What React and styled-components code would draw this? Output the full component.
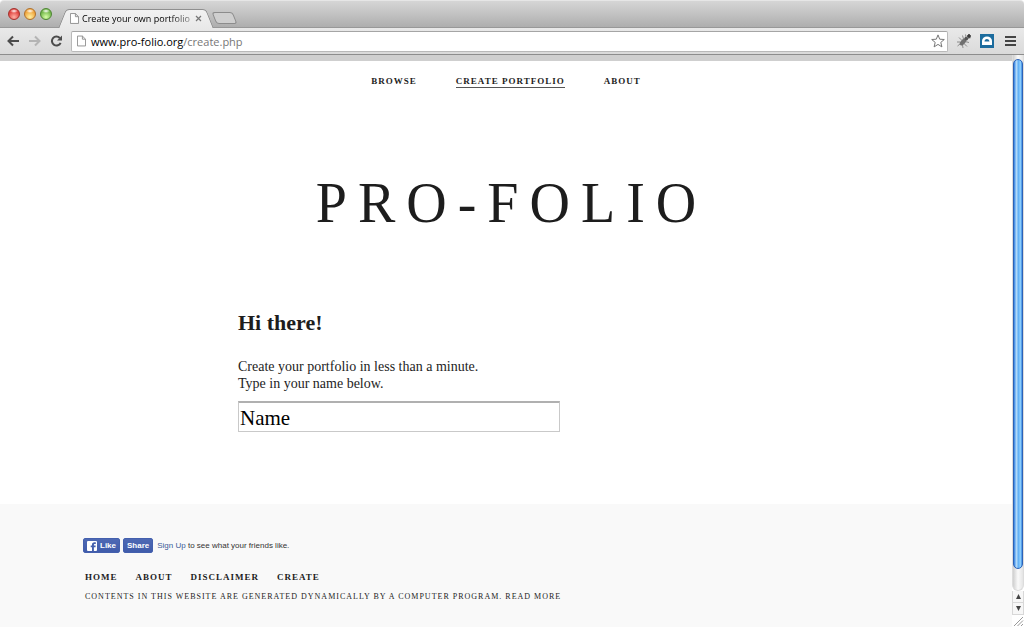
import React from 'react';
import styled, { createGlobalStyle } from 'styled-components';

const serif = "'Liberation Serif', 'Times New Roman', serif";
const sans = "'Liberation Sans', Arial, sans-serif";
const chromeFont = "'Open Sans', 'Noto Sans', sans-serif";
const ink = '#1d1d1d';
const facebook = '#4460ae';

const GlobalStyle = createGlobalStyle`
  * {
    box-sizing: border-box;
  }
  body {
    margin: 0;
    background: #fff;
    color: ${ink};
    font-family: ${serif};
  }
`;

const Browser = styled.div`
  min-height: 100vh;
  display: flex;
  flex-direction: column;
`;

const TabStrip = styled.div`
  display: flex;
  align-items: flex-end;
  height: 28px;
  padding-left: 8px;
  background: linear-gradient(#d6d6d6, #aeaeae);
  border-top: 1px solid #e6e6e6;
  border-bottom: 1px solid #989898;
  border-radius: 4px 4px 0 0;
`;

const Lights = styled.div`
  display: flex;
  gap: 4px;
  margin-bottom: 7px;
`;

const Light = styled.button`
  width: 12px;
  height: 12px;
  padding: 0;
  border: 1px solid ${(props) => props.$edge};
  border-radius: 50%;
  background: radial-gradient(ellipse 4px 2px at 50% 20%, #fff, transparent),
    radial-gradient(circle at 50% 80%, ${(props) => props.$glow}, ${(props) => props.$color} 65%);
`;

const Tab = styled.div`
  position: relative;
  z-index: 1;
  display: flex;
  align-items: center;
  width: 148px;
  height: 19px;
  margin: 0 0 -1px 10px;
  padding: 0 8px;
  font: 9px ${chromeFont};
  color: #000;
  &::before,
  &::after {
    content: '';
    position: absolute;
    z-index: -1;
    top: 0;
    bottom: 0;
    background: linear-gradient(#f2f2f2, #e9e9e9);
    border-top: 1px solid #8f8f8f;
  }
  &::before {
    left: 0;
    right: 30%;
    border-left: 1px solid #8f8f8f;
    border-top-left-radius: 4px;
    transform: skewX(-22deg);
  }
  &::after {
    left: 30%;
    right: 0;
    border-right: 1px solid #8f8f8f;
    border-top-right-radius: 4px;
    transform: skewX(22deg);
  }
`;

const TabTitle = styled.span`
  flex: 1;
  margin-left: 3px;
  white-space: nowrap;
  mask-image: linear-gradient(to right, #000 80%, rgba(0, 0, 0, 0.4));
`;

const CloseButton = styled.button`
  display: flex;
  margin-left: 4px;
  padding: 0;
  border: 0;
  background: none;
`;

const NewTab = styled.button`
  width: 21px;
  height: 12px;
  margin: 0 0 3px 4px;
  padding: 0;
  border: 1px solid #8c8c8c;
  border-radius: 3px;
  background: #cfcfcf;
  transform: skewX(22deg);
`;

const Toolbar = styled.div`
  display: flex;
  align-items: center;
  height: 27px;
  padding: 0 8px 0 6px;
  background: linear-gradient(#e9e9e9, #dadada);
  border-bottom: 1px solid #8d8d8d;
`;

const ToolButton = styled.button`
  display: flex;
  margin: 0 0 0 ${(props) => props.$gap || 0}px;
  padding: 0;
  border: 0;
  background: none;
`;

const AddressBar = styled.div`
  flex: 1;
  display: flex;
  align-items: center;
  height: 21px;
  margin-left: 8px;
  padding: 0 2px 0 5px;
  background: #fff;
  border: 1px solid #b9b9b9;
  border-top-color: #a5a5a5;
  border-radius: 2px;
`;

const Url = styled.div`
  flex: 1;
  margin-left: 5px;
  font: 11px ${chromeFont};
  color: #777;
`;

const Host = styled.span`
  color: #000;
`;

const Viewport = styled.div`
  flex: 1;
  display: flex;
`;

const Page = styled.div`
  flex: 1;
  display: flex;
  flex-direction: column;
  border-top: 6px solid #cfcfcf;
`;

const Nav = styled.nav`
  display: flex;
  justify-content: center;
  gap: 39px;
  padding-top: 14px;
`;

const NavLink = styled.a`
  font-size: 9px;
  line-height: 12px;
  font-weight: bold;
  letter-spacing: 1px;
  text-transform: uppercase;
  text-decoration: none;
  color: ${ink};
  border-bottom: 1px solid ${(props) => (props.$active ? '#555' : 'transparent')};
`;

const Logo = styled.h1`
  margin: 83px 0 0;
  padding-left: 11px;
  font-size: 56px;
  line-height: 64px;
  font-weight: normal;
  letter-spacing: 11px;
  text-align: center;
`;

const Content = styled.main`
  flex: 1;
  width: 100%;
  max-width: 536px;
  margin: 0 auto;
  padding: 75px 0 72px;
`;

const Greeting = styled.h2`
  margin: 0 0 22px;
  font-size: 22px;
  line-height: 26px;
`;

const Intro = styled.label`
  display: block;
  margin-bottom: 9px;
  font-size: 14px;
  line-height: 17px;
`;

const NameInput = styled.input`
  display: block;
  width: 60%;
  height: 31px;
  padding: 2px 1px 0;
  border: 1px solid #c9c9c9;
  border-top: 2px solid #b0b0b0;
  border-radius: 0;
  outline: none;
  font: 21px ${serif};
  color: #000;
`;

const Footer = styled.footer`
  padding: 34px 85px 24px;
  background: #f9f9f9;
`;

const Social = styled.div`
  display: flex;
  align-items: center;
  gap: 3px;
  margin-left: -2px;
  font: 8px ${sans};
  color: #333;
`;

const SocialButton = styled.button`
  display: flex;
  align-items: center;
  gap: 3px;
  height: 15px;
  padding: 0 3px;
  border: 1px solid ${facebook};
  border-radius: 2px;
  background: linear-gradient(#4e69b4, #405cab);
  font: bold 8px ${sans};
  color: #fff;
`;

const SocialText = styled.span`
  margin-left: 1px;
`;

const SignUp = styled.a`
  color: #3b5998;
  text-decoration: none;
`;

const FooterNav = styled.nav`
  display: flex;
  gap: 18px;
  margin: 18px 0 6px;
`;

const Legal = styled.p`
  margin: 0;
  font-size: 8px;
  line-height: 13px;
  letter-spacing: 1px;
  text-transform: uppercase;
`;

const LegalLink = styled.a`
  color: inherit;
  text-decoration: none;
`;

const Scrollbar = styled.div`
  display: flex;
  flex-direction: column;
  width: 12px;
  background: #fff;
`;

const Track = styled.div`
  flex: 1;
  padding-top: 4px;
  border: 1px solid #dcdcdc;
  border-top: 0;
  border-radius: 0 0 6px 6px;
  background: linear-gradient(to right, #cfcfcf, #fafafa 50%, #e4e4e4);
`;

const Thumb = styled.div`
  height: 96%;
  border: 1px solid #2b62b8;
  border-radius: 6px;
  background: linear-gradient(to right, #2f7fe0, #b5dcfb 30%, #62b0f4 55%, #8fd0ff 80%, #3f8be0);
`;

const ScrollButton = styled.button`
  display: flex;
  align-items: center;
  justify-content: center;
  height: 12px;
  padding: 0;
  border: 1px solid #d8d8d8;
  border-top: 0;
  background: #f7f7f7;
`;

const Grip = styled.svg`
  display: block;
`;

const PageIcon = ({ width, height }) => (
  <svg width={width} height={height} viewBox="0 0 10 12" fill="#fff" stroke="#8a8a8a">
    <path d="M.5.5h5.5l3.5 3.5v7.5h-9zM6 .5V4h3.5" />
  </svg>
);

const BugIcon = () => (
  <svg width="16" height="16" viewBox="0 0 16 16" fill="none" stroke="#777">
    <ellipse cx="7" cy="9" rx="2.3" ry="4" transform="rotate(42 7 9)" fill="#707070" stroke="none" />
    <circle cx="10.3" cy="5.6" r="1.9" fill="#555" stroke="none" />
    <path d="M5.5 7L3 4.5M7.5 6L6.5 2.5M4 9H1M9 8.5l4 1M8 10.5l3 3M6.5 12l.5 3M4 11l-2.5 2" strokeWidth=".8" />
    <path d="M11 4.5l2-2M10 4l-.5-2.5M12 5.5l3-1" strokeWidth=".8" />
    <path d="M13 1v4M11 3h4" stroke="#333" strokeWidth="1.6" />
  </svg>
);

const App = () => {
  const [name, setName] = React.useState('Name');
  return (
    <Browser>
      <GlobalStyle />
      <TabStrip>
        <Lights>
          <Light aria-label="Close window" $edge="#a3312c" $color="#e0403c" $glow="#ffb0a4" />
          <Light aria-label="Minimize window" $edge="#b0702a" $color="#f0a43c" $glow="#fff0a0" />
          <Light aria-label="Zoom window" $edge="#4d8532" $color="#70b548" $glow="#d8ffa8" />
        </Lights>
        <Tab>
          <PageIcon width={9} height={11} />
          <TabTitle>Create your own portfolio</TabTitle>
          <CloseButton aria-label="Close tab">
            <svg width="7" height="7" viewBox="0 0 7 7" stroke="#777" strokeWidth="1.2">
              <path d="M1 1l5 5M6 1L1 6" />
            </svg>
          </CloseButton>
        </Tab>
        <NewTab aria-label="New tab" />
      </TabStrip>
      <Toolbar>
        <ToolButton aria-label="Back">
          <svg width="14" height="12" viewBox="0 0 14 12" fill="none" stroke="#4c4c4c" strokeWidth="2">
            <path d="M13 6H2.5M7 1.5L2.5 6L7 10.5" />
          </svg>
        </ToolButton>
        <ToolButton aria-label="Forward" $gap={8}>
          <svg width="14" height="12" viewBox="0 0 14 12" fill="none" stroke="#b4b4b4" strokeWidth="2">
            <path d="M1 6h10.5M7 1.5L11.5 6L7 10.5" />
          </svg>
        </ToolButton>
        <ToolButton aria-label="Reload" $gap={8}>
          <svg width="13" height="12" viewBox="0 0 13 12" fill="none" stroke="#4c4c4c" strokeWidth="2">
            <path d="M9.8 3A4.5 4.5 0 1 0 10.6 7.8" />
            <path d="M12 .5v5H7z" fill="#4c4c4c" stroke="none" />
          </svg>
        </ToolButton>
        <AddressBar>
          <PageIcon width={9} height={12} />
          <Url>
            <Host>www.pro-folio.org</Host>/create.php
          </Url>
          <ToolButton aria-label="Bookmark this page">
            <svg width="14" height="14" viewBox="0 0 14 14" fill="#fff" stroke="#777">
              <path d="M7 .9l1.7 4.3 4.6.3-3.5 2.9 1.1 4.5L7 10.4l-3.9 2.5 1.1-4.5L.7 5.5l4.6-.3z" />
            </svg>
          </ToolButton>
        </AddressBar>
        <ToolButton aria-label="Bug tool" $gap={8}>
          <BugIcon />
        </ToolButton>
        <ToolButton aria-label="Extension" $gap={8}>
          <svg width="14" height="14" viewBox="0 0 14 14">
            <path fill="#1c6c9e" d="M0 0h14v14H0z" />
            <path fill="#fff" d="M2 11V7a5 4.5 0 0 1 10 0v4z" />
            <path fill="#1c6c9e" d="M4.5 7.5a2.5 2.5 0 0 1 5 0z" />
          </svg>
        </ToolButton>
        <ToolButton aria-label="Menu" $gap={11}>
          <svg width="11" height="12" viewBox="0 0 11 12" fill="#444">
            <path d="M0 1h11v2H0zM0 5h11v2H0zM0 9h11v2H0z" />
          </svg>
        </ToolButton>
      </Toolbar>
      <Viewport>
        <Page>
          <Nav>
            <NavLink href="#browse">Browse</NavLink>
            <NavLink href="#create" $active>
              Create Portfolio
            </NavLink>
            <NavLink href="#about">About</NavLink>
          </Nav>
          <Logo>PRO-FOLIO</Logo>
          <Content>
            <Greeting>Hi there!</Greeting>
            <Intro htmlFor="name">
              Create your portfolio in less than a minute.
              <br />
              Type in your name below.
            </Intro>
            <NameInput id="name" type="text" value={name} onChange={(e) => setName(e.target.value)} />
          </Content>
          <Footer>
            <Social>
              <SocialButton>
                <svg width="10" height="10" viewBox="0 0 10 10">
                  <rect width="10" height="10" rx="1" fill="#fff" />
                  <path fill={facebook} d="M5 10V6.2H3.7V4.6H5V3.6C5 2.2 5.900 1.300 7.400 1.300h1.400V3H7.800c-.7 0-.9.3-.9.800v.8h1.800l-.2 1.600H6.900V10z" />
                </svg>
                Like
              </SocialButton>
              <SocialButton>Share</SocialButton>
              <SocialText>
                <SignUp href="#signup">Sign Up</SignUp> to see what your friends like.
              </SocialText>
            </Social>
            <FooterNav>
              <NavLink href="#home">Home</NavLink>
              <NavLink href="#about">About</NavLink>
              <NavLink href="#disclaimer">Disclaimer</NavLink>
              <NavLink href="#create">Create</NavLink>
            </FooterNav>
            <Legal>
              Contents in this website are generated dynamically by a computer program.{' '}
              <LegalLink href="#more">Read more</LegalLink>
            </Legal>
          </Footer>
        </Page>
        <Scrollbar>
          <Track>
            <Thumb />
          </Track>
          <ScrollButton aria-label="Scroll up">
            <svg width="5" height="5" viewBox="0 0 5 5" fill="#444">
              <path d="M2.5 0L5 5H0z" />
            </svg>
          </ScrollButton>
          <ScrollButton aria-label="Scroll down">
            <svg width="5" height="5" viewBox="0 0 5 5" fill="#444">
              <path d="M0 0h5L2.5 5z" />
            </svg>
          </ScrollButton>
          <Grip width="12" height="12" viewBox="0 0 12 12" stroke="#999">
            <path d="M2 11l9-9M5.5 11L11 5.5M9 11l2-2" />
          </Grip>
        </Scrollbar>
      </Viewport>
    </Browser>
  );
};

export default App;
